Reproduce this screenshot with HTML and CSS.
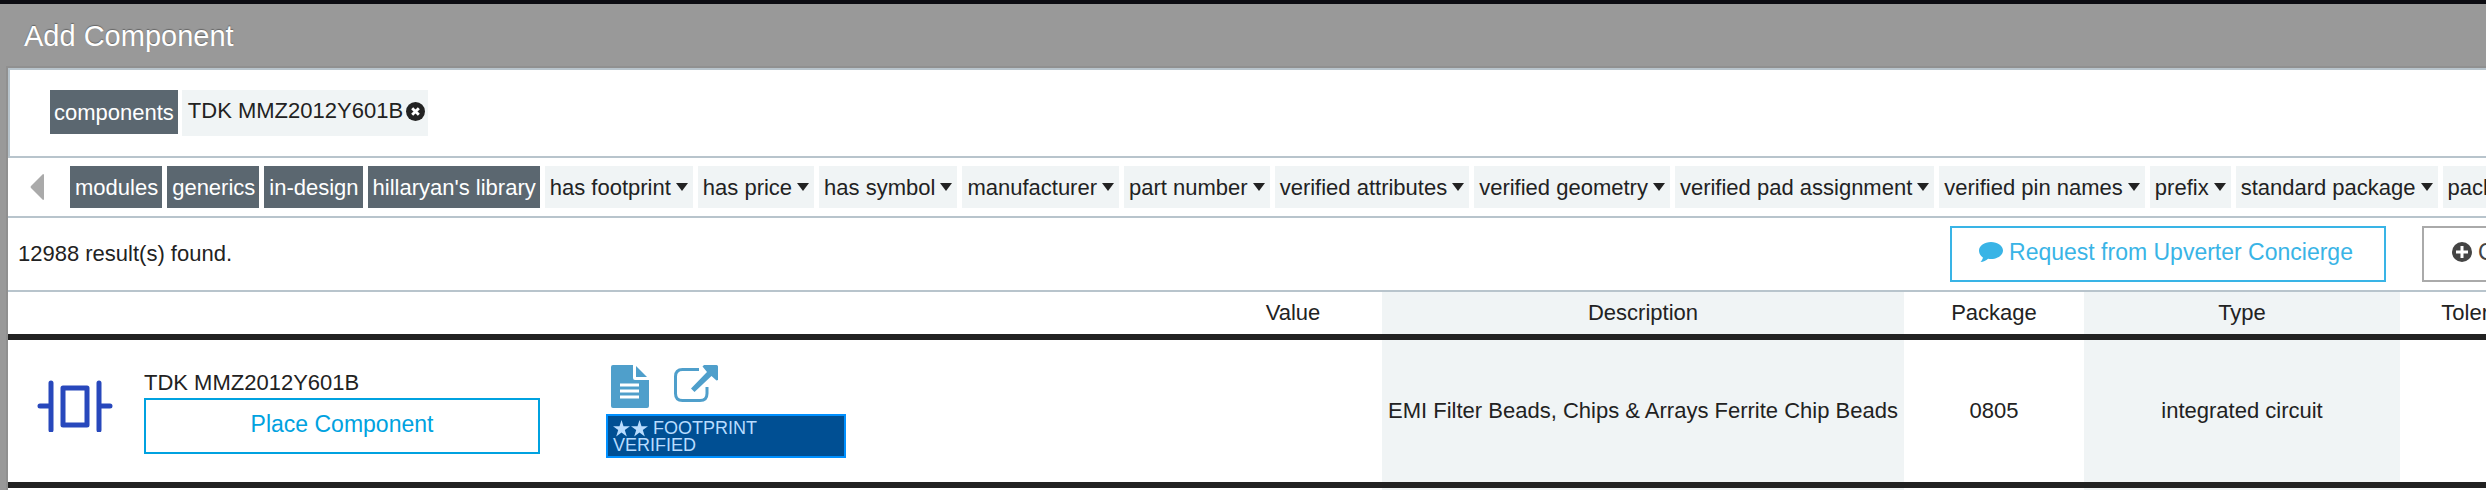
FILE: index.html
```html
<!DOCTYPE html>
<html lang="en">
<head>
    <meta charset="UTF-8">
    <meta name="viewport" content="width=device-width, initial-scale=1.0">
    <title>Add Component</title>
    <link rel="stylesheet" href="styles.css">
</head>
<body>
    <div class="dialog">
        <h1>Add Component</h1>

        <div class="panel">
            <div class="search-bar">
                <button type="button" class="tag active">components</button>
                <span class="tag search-term">TDK MMZ2012Y601B
                    <button type="button" class="remove" aria-label="Remove">
                        <svg viewBox="0 0 20 20"><circle cx="10" cy="10" r="10" fill="#222"/><path d="M6.500 6.500l7 7M13.500 6.500l-7 7" stroke="#fff" stroke-width="3"/></svg>
                    </button>
                </span>
            </div>

            <div class="filters">
                <button type="button" class="scroll-left" aria-label="Scroll left">
                    <svg viewBox="0 0 14 26"><path d="M13 0q1 0 1 1v24q0 1-1 1L1 14q-1-1 0-2z" fill="#aaa"/></svg>
                </button>
                <button type="button" class="tag active">modules</button>
                <button type="button" class="tag active">generics</button>
                <button type="button" class="tag active">in-design</button>
                <button type="button" class="tag active">hillaryan's library</button>
                <button type="button" class="tag dropdown">has footprint</button>
                <button type="button" class="tag dropdown">has price</button>
                <button type="button" class="tag dropdown">has symbol</button>
                <button type="button" class="tag dropdown">manufacturer</button>
                <button type="button" class="tag dropdown">part number</button>
                <button type="button" class="tag dropdown">verified attributes</button>
                <button type="button" class="tag dropdown">verified geometry</button>
                <button type="button" class="tag dropdown">verified pad assignment</button>
                <button type="button" class="tag dropdown">verified pin names</button>
                <button type="button" class="tag dropdown">prefix</button>
                <button type="button" class="tag dropdown">standard package</button>
                <button type="button" class="tag dropdown">package</button>
            </div>

            <div class="results-bar">
                <span class="count">12988 result(s) found.</span>
                <div class="actions">
                    <button type="button" class="btn btn-request">
                        <svg viewBox="0 0 24 20"><path d="M12 0c6.600 0 12 3.800 12 8.500S18.600 17 12 17c-1 0-2-.1-2.900-.3C7 18.700 4.500 19.800 1.500 20c1.300-1.300 2.200-2.900 2.400-4.500C1.500 13.900 0 11.400 0 8.500 0 3.800 5.400 0 12 0z" fill="#39b4e6"/></svg>
                        Request from Upverter Concierge
                    </button>
                    <button type="button" class="btn btn-create">
                        <svg viewBox="0 0 20 20"><circle cx="10" cy="10" r="10" fill="#444"/><path d="M10 4v12M4 10h12" stroke="#fff" stroke-width="3"/></svg>
                        Create
                    </button>
                </div>
            </div>

            <table class="results">
                <colgroup>
                    <col class="col-symbol">
                    <col class="col-name">
                    <col class="col-links">
                    <col class="col-value">
                    <col class="col-description">
                    <col class="col-package">
                    <col class="col-type">
                    <col class="col-tolerance">
                </colgroup>
                <thead>
                    <tr>
                        <th></th>
                        <th></th>
                        <th></th>
                        <th>Value</th>
                        <th class="shaded">Description</th>
                        <th>Package</th>
                        <th class="shaded">Type</th>
                        <th>Tolerance</th>
                    </tr>
                </thead>
                <tbody>
                    <tr>
                        <td class="symbol">
                            <svg viewBox="0 0 76 52" fill="none" stroke="#2848bc" stroke-width="5" stroke-linecap="round" stroke-linejoin="round"><path d="M3 26H14M14 3v47M62 3v47M62 26h11"/><path d="M26 8h24v37H26z"/></svg>
                        </td>
                        <td class="name">
                            <div>TDK MMZ2012Y601B</div>
                            <button type="button" class="btn btn-place">Place Component</button>
                        </td>
                        <td class="links">
                            <div class="icons">
                                <a href="#" aria-label="Datasheet">
                                    <svg width="38" height="43" viewBox="0 0 38 43"><path d="M2 0h20v13q0 2 2 2h14v26q0 2-2 2H2q-2 0-2-2V2q0-2 2-2z" fill="#4f9fcb"/><path d="M25 1l11 11H25z" fill="#4f9fcb"/><path d="M9 20h19M9 26h19M9 32h19" stroke="#fff" stroke-width="3"/></svg>
                                </a>
                                <a href="#" aria-label="Open">
                                    <svg width="44" height="37" viewBox="0 0 44 37"><path d="M25 4.500H8.500q-7 0-7 7v17q0 7 7 7H26q7 0 7-7V22" fill="none" stroke="#4f9fcb" stroke-width="3"/><path d="M30 0h12.500Q44 0 44 1.500V15l-1.500 .5-5-4.500L20.500 27 17 23.500 33 7l-4.500-5.500z" fill="#4f9fcb"/></svg>
                                </a>
                            </div>
                            <div class="badge">
                                <svg viewBox="0 0 35 17"><path d="M8.500 0l2 6.200H17l-5.200 3.900 2 6.400-5.300-3.900-5.300 3.900 2-6.400L0 6.200h6.500zM26.500 0l2 6.200H35l-5.200 3.900 2 6.400-5.300-3.900-5.300 3.900 2-6.400L18 6.200h6.500z" fill="#b8dcff"/></svg>
                                FOOTPRINT<br>VERIFIED
                            </div>
                        </td>
                        <td></td>
                        <td class="shaded">EMI Filter Beads, Chips &amp; Arrays Ferrite Chip Beads</td>
                        <td>0805</td>
                        <td class="shaded">integrated circuit</td>
                        <td></td>
                    </tr>
                    <tr>
                        <td></td>
                        <td></td>
                        <td></td>
                        <td></td>
                        <td class="shaded"></td>
                        <td></td>
                        <td class="shaded"></td>
                        <td></td>
                    </tr>
                </tbody>
            </table>
        </div>
    </div>
</body>
</html>
```
FILE: styles.css
```css
* {
    box-sizing: border-box;
}
body {
    font-family: "Liberation Sans", Arial, sans-serif;
    font-size: 22px;
    margin: 0;
    color: #222;
    background-color: #999;
    overflow: hidden;
}
button {
    font: inherit;
    border: none;
    cursor: pointer;
}
.dialog {
    border-top: 4px solid #0c0c12;
    padding-left: 8px;
}
h1 {
    margin: 0;
    padding: 16px 16px;
    font-size: 29px;
    font-weight: normal;
    line-height: 32px;
    color: white;
    text-shadow: 0 -1px 1px #666;
}
.panel {
    background-color: white;
    box-shadow: 0 0 0 2px #909090;
    overflow: hidden;
}
.search-bar {
    display: flex;
    align-items: flex-start;
    gap: 4px;
    height: 90px;
    padding: 20px 40px;
    border: 2px solid #b8c4cc;
    border-right: none;
}
.tag {
    flex: none;
    height: 42px;
    padding: 0 4px 0 5px;
    line-height: 42px;
    white-space: nowrap;
    color: #222;
    background-color: #f0f4f5;
}
.tag.active {
    color: white;
    background-color: #5b6770;
}
.search-bar .tag {
    height: 44px;
    padding: 0 4px;
    line-height: 46px;
}
.search-bar .search-term {
    display: flex;
    align-items: center;
    gap: 3px;
    height: 46px;
    padding: 0 3px 4px 6px;
}
.remove {
    display: flex;
    padding: 0;
    background: none;
}
.remove svg {
    width: 19px;
    height: 19px;
}
.filters {
    display: flex;
    align-items: center;
    gap: 5px;
    height: 60px;
    padding-left: 22px;
    border-bottom: 2px solid #b8c4cc;
}
.filters .tag {
    line-height: 44px;
}
.scroll-left {
    display: flex;
    flex: none;
    padding: 0;
    margin-right: 21px;
    background: none;
}
.scroll-left svg {
    width: 14px;
    height: 26px;
}
.dropdown::after {
    content: "";
    display: inline-block;
    margin: 0 1px 4px 5px;
    border: 6px solid transparent;
    border-top: 8px solid #222;
    border-bottom: none;
}
.results-bar {
    display: flex;
    align-items: center;
    justify-content: space-between;
    height: 74px;
    padding-left: 10px;
    border-bottom: 2px solid #b8c4cc;
}
.actions {
    display: flex;
    gap: 36px;
    margin-right: -80px;
}
.btn {
    display: flex;
    align-items: center;
    justify-content: center;
    height: 56px;
    padding: 0 26px 4px;
    border: 2px solid #39b4e6;
    font-size: 23px;
    color: #39b4e6;
    background-color: white;
}
.btn svg {
    flex: none;
    height: 20px;
    margin-right: 6px;
}
.btn-request {
    width: 436px;
    padding-right: 30px;
}
.btn-create {
    width: 144px;
    padding-left: 28px;
    border-color: #aaa;
    color: #444;
    justify-content: flex-start;
}
.results {
    width: 100%;
    min-width: 2570px;
    table-layout: fixed;
    border-collapse: separate;
    border-spacing: 0;
    text-align: center;
}
.results th {
    height: 48px;
    padding: 0;
    font-weight: normal;
    border-bottom: 6px solid #222;
}
.results td {
    height: 148px;
    padding: 0;
    border-bottom: 6px solid #222;
}
.shaded {
    background-color: #f0f4f5;
}
.col-symbol {
    width: 136px;
}
.col-name {
    width: 462px;
}
.col-value {
    width: 178px;
}
.col-description {
    width: 522px;
}
.col-package {
    width: 180px;
}
.col-type {
    width: 316px;
}
.col-tolerance {
    width: 178px;
}
.symbol svg {
    display: block;
    width: 76px;
    margin: -10px 0 0 29px;
}
.results .name,
.results .links {
    text-align: left;
    vertical-align: top;
}
.results .name {
    padding: 28px 66px 0 0;
    line-height: 30px;
}
.btn-place {
    width: 100%;
    border-color: #00a2e0;
    color: #00a2e0;
}
.icons {
    display: flex;
    align-items: flex-start;
    gap: 25px;
    padding: 25px 0 6px 5px;
}
.icons a,
.icons svg {
    display: block;
}
.badge {
    width: 240px;
    height: 44px;
    padding: 4px 5px 0;
    border: 2px solid #0090ff;
    font-size: 18px;
    line-height: 17px;
    color: #b8dcff;
    background-color: #004f93;
}
.badge svg {
    width: 35px;
    height: 17px;
    vertical-align: top;
}
```
